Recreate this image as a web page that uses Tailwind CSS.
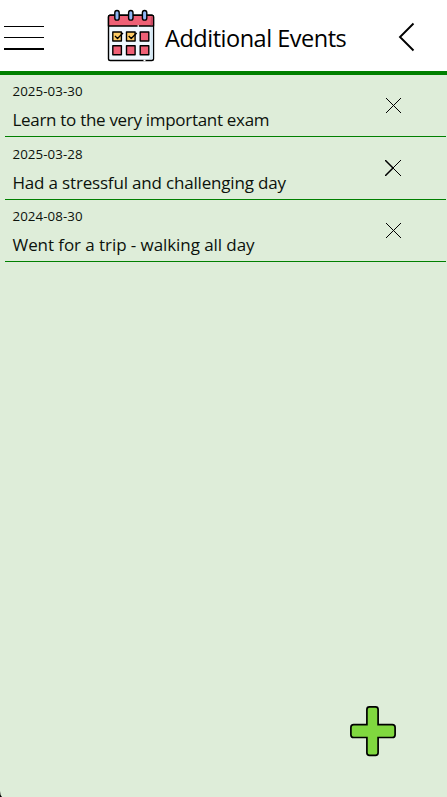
<!DOCTYPE html>
<html lang="en">
<head>
<meta charset="utf-8">
<title>Additional Events</title>
<script src="https://cdn.jsdelivr.net/npm/@tailwindcss/browser@4"></script>
</head>
<body class="bg-[#deedd9] text-[#0c120c] font-['Open_Sans','Noto_Sans',sans-serif]">
<div class="relative flex h-[797px] w-[447px] flex-col overflow-hidden">
  <header class="flex h-[75px] shrink-0 items-start border-b-4 border-[#008000] bg-white pl-1">
    <svg class="mt-[26px] h-6 w-10 shrink-0" viewBox="0 0 40 24" shape-rendering="crispEdges"><path d="M0 0h40v1H0zM0 11h40v1H0zM0 22h40v2H0z"/></svg>
    <svg class="ml-[62px] mt-[8px] h-[56px] w-[50px] shrink-0" viewBox="106 8 50 56" stroke="#000" stroke-width="1.400" stroke-linejoin="round">
      <rect x="108.5" y="15.2" width="45" height="45.300" rx="1.800" fill="#f0f8ff"/>
      <path d="M150.500 26h2.300v33h-4c1.700-2 1.700-4 1.700-8z" fill="#d5e8f4" stroke="none"/>
      <path d="M108.500 26V17q0-1.800 1.800-1.800h41.400q1.800 0 1.800 1.800v9z" fill="#ee6076"/>
      <path d="M151 16.500h1.800v8.800H150.500z" fill="#c94b65" stroke="none"/>
      <g fill="#8fb7f5"><rect x="114.800" y="10.500" width="4.400" height="9.600" rx="2.200"/><rect x="128.600" y="10.500" width="4.400" height="9.600" rx="2.200"/><rect x="142.400" y="10.500" width="4.400" height="9.600" rx="2.200"/></g>
      <g fill="#ffcc66"><rect x="112.800" y="32" width="8.600" height="9"/><rect x="126.500" y="32" width="8.600" height="9"/></g>
      <g fill="#ee6076"><rect x="140.200" y="32" width="8.600" height="9"/><rect x="112.800" y="45.800" width="8.600" height="9"/><rect x="126.500" y="45.800" width="8.600" height="9"/><rect x="140.200" y="45.800" width="8.600" height="9"/></g>
      <path d="M115 36l2.500 2.500 5.500-5.500M128.700 36l2.500 2.500 5.500-5.500" fill="none" stroke-width="1.400"/>
      <path d="M137.500 26h1.500M143.500 60.500h2" stroke="#fff" stroke-width="1.400"/>
    </svg>
    <h1 class="ml-[9px] mt-[22px] w-[190px] whitespace-nowrap text-[23.5px] leading-8 tracking-[-0.480px] text-black">Additional Events</h1>
    <svg class="ml-[42px] mt-[22px] h-[30px] w-[18px] shrink-0" viewBox="397 22 18 30" fill="none" stroke="#000" stroke-width="1.900"><path d="M413.500 23.500L400 37l13.500 13.500"/></svg>
  </header>
  <main class="ml-[5px] mr-px flex flex-col">
    <article class="flex h-[62px] justify-between border-b border-[#008000] pl-[7.500px] pr-[45px]">
      <div><p class="mt-[6px] text-[13.300px] leading-5 tracking-[0.080px]">2025-03-30</p><p class="mt-[7px] whitespace-nowrap text-[17px] leading-6 tracking-[-0.300px]">Learn to the very important exam</p></div>
      <svg class="mt-[23px] h-[15px] w-[15px]" viewBox="0 0 15 15" stroke="#000" stroke-width="1"><path d="M0 0l15 15M15 0L0 15"/></svg>
    </article>
    <article class="flex h-[63px] justify-between border-b border-[#008000] pl-[7.500px] pr-[45px]">
      <div><p class="mt-[7px] text-[13.300px] leading-5 tracking-[0.080px]">2025-03-28</p><p class="mt-[7px] whitespace-nowrap text-[17px] leading-6 tracking-[-0.180px]">Had a stressful and challenging day</p></div>
      <svg class="mt-[23px] h-4 w-4" viewBox="0 0 16 16" stroke="#000" stroke-width="1"><path d="M0 0l16 16M16 0L0 16"/><path d="M0 0l8 8L0 16" fill="none" stroke-width="1.500"/></svg>
    </article>
    <article class="flex h-[62px] justify-between border-b border-[#008000] pl-[7.500px] pr-[45px]">
      <div><p class="mt-[6px] text-[13.300px] leading-5 tracking-[0.080px]">2024-08-30</p><p class="mt-[7px] whitespace-nowrap text-[17px] leading-6 tracking-[-0.070px]">Went for a trip - walking all day</p></div>
      <svg class="mt-[23px] h-[15px] w-[15px]" viewBox="0 0 15 15" stroke="#000" stroke-width="1"><path d="M0 0l15 15M15 0L0 15"/></svg>
    </article>
  </main>
  <svg class="absolute left-[349px] top-[705px] h-[52px] w-[48px]" viewBox="349 705 48 52"><path d="M369.500 706.900h6q2.600 0 2.600 2.600v15.200h14.200q2.800 0 2.800 2.800v7.200q0 2.800-2.800 2.800h-14.200v15.200q0 2.600-2.600 2.600h-6q-2.600 0-2.600-2.600v-15.200h-13.200q-2.800 0-2.800-2.800v-7.200q0-2.800 2.800-2.800h13.200v-15.200q0-2.600 2.600-2.600z" fill="#80d83f" stroke="#000" stroke-width="1.700"/></svg>
  <svg class="absolute bottom-0 left-0 h-[6px] w-[2px]" viewBox="0 0 2 6"><path d="M0 0q0 4 2 6H0z"/></svg>
</div>
</body>
</html>
